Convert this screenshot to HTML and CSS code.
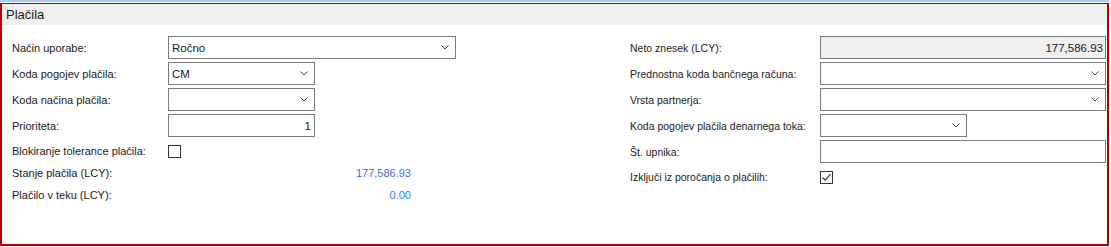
FILE: index.html
```html
<!DOCTYPE html>
<html lang="sl">
  <head>
    <meta charset="utf-8" />
    <title>Plačila</title>
    <link rel="stylesheet" href="styles.css">
  </head>
  <body>
    <div class="topline"></div>
    <div class="panel">
      <div class="panel-head">Plačila</div>
      <div class="panel-body">
        <div class="col col-left">
          <div class="row">
            <span class="label">Način uporabe:</span>
            <div class="box select wide"><span>Ročno</span>
              <svg class="chev" width="8" height="5" viewBox="0 0 8 5"><polyline points="0.5,0.5 4,4 7.5,0.5" /></svg>
            </div>
          </div>
          <div class="row">
            <span class="label">Koda pogojev plačila:</span>
            <div class="box select narrow"><span>CM</span>
              <svg class="chev" width="8" height="5" viewBox="0 0 8 5"><polyline points="0.5,0.5 4,4 7.5,0.5" /></svg>
            </div>
          </div>
          <div class="row">
            <span class="label">Koda načina plačila:</span>
            <div class="box select narrow"><span></span>
              <svg class="chev" width="8" height="5" viewBox="0 0 8 5"><polyline points="0.5,0.5 4,4 7.5,0.5" /></svg>
            </div>
          </div>
          <div class="row">
            <span class="label">Prioriteta:</span>
            <div class="box narrow num">1</div>
          </div>
          <div class="row row-flat">
            <span class="label">Blokiranje tolerance plačila:</span>
            <span class="check"></span>
          </div>
          <div class="row row-flat">
            <span class="label">Stanje plačila (LCY):</span>
            <span class="value">177,586.93</span>
          </div>
          <div class="row row-flat">
            <span class="label">Plačilo v teku (LCY):</span>
            <span class="value value-light">0.00</span>
          </div>
        </div>

        <div class="col col-right">
          <div class="row">
            <span class="label">Neto znesek (LCY):</span>
            <div class="box wide num readonly">177,586.93</div>
          </div>
          <div class="row">
            <span class="label">Prednostna koda bančnega računa:</span>
            <div class="box select wide"><span></span>
              <svg class="chev" width="8" height="5" viewBox="0 0 8 5"><polyline points="0.5,0.5 4,4 7.5,0.5" /></svg>
            </div>
          </div>
          <div class="row">
            <span class="label">Vrsta partnerja:</span>
            <div class="box select wide"><span></span>
              <svg class="chev" width="8" height="5" viewBox="0 0 8 5"><polyline points="0.5,0.5 4,4 7.5,0.5" /></svg>
            </div>
          </div>
          <div class="row">
            <span class="label">Koda pogojev plačila denarnega toka:</span>
            <div class="box select narrow"><span></span>
              <svg class="chev" width="8" height="5" viewBox="0 0 8 5"><polyline points="0.5,0.5 4,4 7.5,0.5" /></svg>
            </div>
          </div>
          <div class="row">
            <span class="label">Št. upnika:</span>
            <div class="box wide"></div>
          </div>
          <div class="row row-flat">
            <span class="label">Izključi iz poročanja o plačilih:</span>
            <span class="check">
              <svg width="11" height="11" viewBox="0 0 11 11"><path d="M1.5 5.5 L4.2 8.2 L9.6 2.2" /></svg>
            </span>
          </div>
        </div>
      </div>
    </div>
  </body>
</html>
```

FILE: styles.css
```css
* {
  margin: 0;
  padding: 0;
  box-sizing: border-box;
}

body {
  font-family: "Liberation Sans", Arial, sans-serif;
  font-size: 11px;
  color: #1b1b1b;
  background: #fff;
}

.topline {
  width: 1109px;
  height: 2px;
  background: #a9c8ef;
  margin-bottom: 1px;
}

.panel {
  width: 1109px;
  height: 243px;
  border: 2px solid #b40000;
  border-top-width: 1px;
}

.panel-head {
  height: 21px;
  line-height: 21px;
  padding-left: 4px;
  font-size: 13px;
  background: #efefef;
}

.panel-body {
  display: flex;
  padding: 11px 0 0 10px;
}

.col-left {
  width: 618px;
}

.col-right {
  width: 476px;
}

.row {
  display: flex;
  align-items: center;
  height: 23px;
  margin-bottom: 3px;
}

.row-flat {
  height: 22px;
  margin-bottom: 0;
}

.col-right .row-flat {
  margin-top: 0;
}

.label {
  width: 156px;
  flex: none;
  white-space: nowrap;
}

.col-right .label {
  width: 190px;
  font-size: 10.5px;
}

.box {
  height: 23px;
  border: 1px solid #7a7a7a;
  background: #fff;
  display: flex;
  align-items: center;
  padding: 0 3px;
  font-size: 11.5px;
}

.wide {
  width: 288px;
}

.col-right .wide {
  width: 286px;
}

.narrow {
  width: 147px;
}

.select span {
  flex: 1;
}

.chev {
  margin-right: 3px;
}

.chev polyline {
  fill: none;
  stroke: #4a4a4a;
  stroke-width: 1;
}

.num {
  justify-content: flex-end;
}

.readonly {
  background: #efefef;
  padding-right: 2px;
}

.check {
  width: 13px;
  height: 13px;
  border: 1px solid #333;
  background: #fff;
  display: flex;
  align-items: center;
  justify-content: center;
}

.check path {
  fill: none;
  stroke: #333;
  stroke-width: 1.2;
}

.value {
  width: 243px;
  text-align: right;
  color: #3e6dd6;
}

.value-light {
  color: #2b86de;
}
```
